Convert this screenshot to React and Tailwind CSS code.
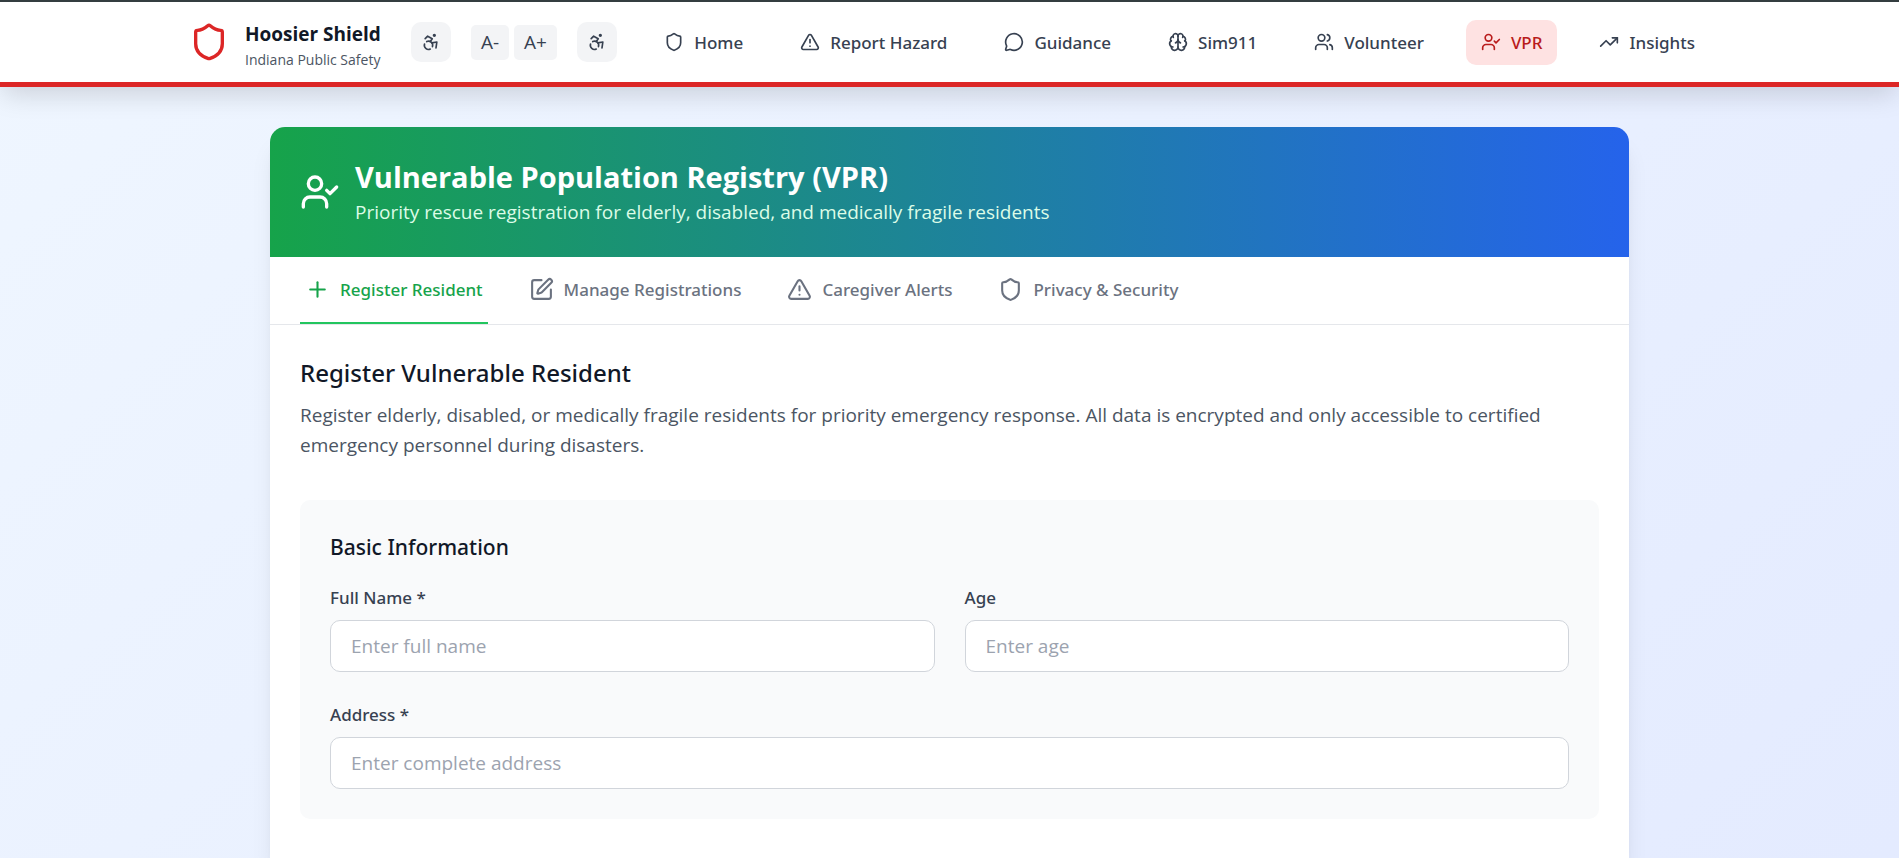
import { useState } from "react";
import {
  Accessibility,
  Brain,
  MessageCircle,
  Plus,
  Shield,
  SquarePen,
  TrendingUp,
  TriangleAlert,
  UserCheck,
  Users,
} from "lucide-react";

const NAV_ITEMS = [
  { id: "home", label: "Home", icon: Shield },
  { id: "hazard", label: "Report Hazard", icon: TriangleAlert },
  { id: "guidance", label: "Guidance", icon: MessageCircle },
  { id: "sim911", label: "Sim911", icon: Brain },
  { id: "volunteer", label: "Volunteer", icon: Users },
  { id: "vpr", label: "VPR", icon: UserCheck },
  { id: "insights", label: "Insights", icon: TrendingUp },
];

const TABS = [
  { id: "register", label: "Register Resident", icon: Plus },
  { id: "manage", label: "Manage Registrations", icon: SquarePen },
  { id: "alerts", label: "Caregiver Alerts", icon: TriangleAlert },
  { id: "privacy", label: "Privacy & Security", icon: Shield },
];

function AccessibilityButton({ label }) {
  return (
    <button
      type="button"
      aria-label={label}
      className="p-[10px] rounded-[10px] bg-[#f3f4f6] text-[#374151] hover:bg-gray-200"
    >
      <Accessibility className="w-5 h-5" />
    </button>
  );
}

function FontSizeButton({ children, label }) {
  return (
    <button
      type="button"
      aria-label={label}
      className="px-[10px] py-[5px] rounded-[5px] bg-[#f3f4f6] text-[#374151] text-[19px] leading-[25px] hover:bg-gray-200"
    >
      {children}
    </button>
  );
}

function Header() {
  return (
    <header className="relative bg-white border-t-2 border-t-[#343d40] border-b-[5px] border-b-[#dc2626] shadow-[0_10px_25px_-3px_rgba(0,0,0,0.15)]">
      <div className="max-w-[1521px] h-20 mx-auto flex items-center justify-between">
        <div className="flex items-center">
          <Shield className="w-10 h-10 text-[#dc2626]" />
          <div className="ml-4 pt-[10px]">
            <h1 className="text-[19px] leading-[25px] font-bold text-[#111827]">Hoosier Shield</h1>
            <p className="text-[14px] leading-[25px] text-[#4b5563]">Indiana Public Safety</p>
          </div>
          <div className="ml-[30px] flex items-center gap-5">
            <AccessibilityButton label="Accessibility options" />
            <div className="flex items-center gap-[5px]">
              <FontSizeButton label="Decrease font size">A-</FontSizeButton>
              <FontSizeButton label="Increase font size">A+</FontSizeButton>
            </div>
            <AccessibilityButton label="Accessibility panel" />
          </div>
        </div>
        <nav className="flex items-center gap-[27px] font-['Noto_Sans',sans-serif]">
          {NAV_ITEMS.map(({ id, label, icon: Icon }) => (
            <a
              key={id}
              href={`#${id}`}
              className={`flex items-center gap-[10px] px-[15px] py-[10px] rounded-[10px] text-[17px] leading-[25px] font-medium ${
                id === "vpr" ? "bg-[#fee2e2] text-[#b91c1c]" : "text-[#374151] hover:bg-gray-100"
              }`}
            >
              <Icon className="w-5 h-5" />
              {label}
            </a>
          ))}
        </nav>
      </div>
    </header>
  );
}

function Field({ id, label, type = "text", placeholder, value, onChange, className = "" }) {
  return (
    <div className={className}>
      <label
        htmlFor={id}
        className="block mb-[10px] font-['Noto_Sans',sans-serif] text-[17px] leading-[25px] font-medium text-[#374151]"
      >
        {label}
      </label>
      <input
        id={id}
        type={type}
        value={value}
        onChange={onChange}
        placeholder={placeholder}
        className="block w-full px-5 py-[10px] bg-white border border-[#d1d5db] rounded-[10px] text-[19px] leading-[30px] text-[#111827] placeholder-[#9ca3af] focus:outline-none focus:ring-2 focus:ring-green-500"
      />
    </div>
  );
}

export default function App() {
  const [tab, setTab] = useState("register");
  const [form, setForm] = useState({ name: "", age: "", address: "" });

  const update = (key) => (e) => setForm({ ...form, [key]: e.target.value });

  return (
    <div className="h-screen overflow-hidden flex flex-col bg-linear-to-br/srgb from-[#eff6ff] to-[#e0e7ff] bg-[length:100%_1800px] bg-no-repeat font-['Open_Sans',sans-serif]">
      <Header />
      <main className="flex-1 px-10 pt-10">
        <div className="max-w-[1359px] h-full mx-auto flex flex-col">
          <div className="flex-1 bg-white rounded-t-[15px] shadow-xl">
            <div className="flex items-center gap-[15px] p-[30px] rounded-t-[15px] bg-linear-to-r/srgb from-[#16a34a] to-[#2563eb]">
              <UserCheck className="w-10 h-10 text-white" />
              <div>
                <h2 className="text-[29px] leading-10 font-bold text-white">
                  Vulnerable Population Registry (VPR)
                </h2>
                <p className="text-[19px] leading-[30px] text-[#dcfce7]">
                  Priority rescue registration for elderly, disabled, and medically fragile residents
                </p>
              </div>
            </div>

            <div className="flex gap-9 px-[30px] border-b border-[#e5e7eb] font-['Noto_Sans',sans-serif]">
              {TABS.map(({ id, label, icon: Icon }) => (
                <button
                  key={id}
                  type="button"
                  onClick={() => setTab(id)}
                  className={`flex items-center gap-[10px] px-[5px] py-5 border-b-2 text-[17px] leading-[25px] font-medium ${
                    tab === id
                      ? "border-[#22c55e] text-[#16a34a]"
                      : "border-transparent text-[#6b7280] hover:text-gray-700"
                  }`}
                >
                  <Icon className="w-[25px] h-[25px]" />
                  {label}
                </button>
              ))}
            </div>

            <div className="p-[30px]">
              <h3 className="mb-[10px] font-['Noto_Sans',sans-serif] text-[24px] leading-[35px] font-medium text-[#111827]">
                Register Vulnerable Resident
              </h3>
              <p className="mb-10 text-[19px] leading-[30px] text-[#4b5563]">
                Register elderly, disabled, or medically fragile residents for priority emergency response. All
                data is encrypted and only accessible to certified emergency personnel during disasters.
              </p>

              <form className="p-[30px] bg-[#f9fafb] rounded-[10px]">
                <h4 className="mb-5 font-['Noto_Sans',sans-serif] text-[21px] leading-[35px] font-medium text-[#111827]">
                  Basic Information
                </h4>
                <div className="grid grid-cols-2 gap-[30px]">
                  <Field
                    id="full-name"
                    label="Full Name *"
                    placeholder="Enter full name"
                    value={form.name}
                    onChange={update("name")}
                  />
                  <Field
                    id="age"
                    label="Age"
                    placeholder="Enter age"
                    value={form.age}
                    onChange={update("age")}
                  />
                  <Field
                    id="address"
                    label="Address *"
                    placeholder="Enter complete address"
                    value={form.address}
                    onChange={update("address")}
                    className="col-span-2"
                  />
                </div>
              </form>
            </div>
          </div>
        </div>
      </main>
    </div>
  );
}
